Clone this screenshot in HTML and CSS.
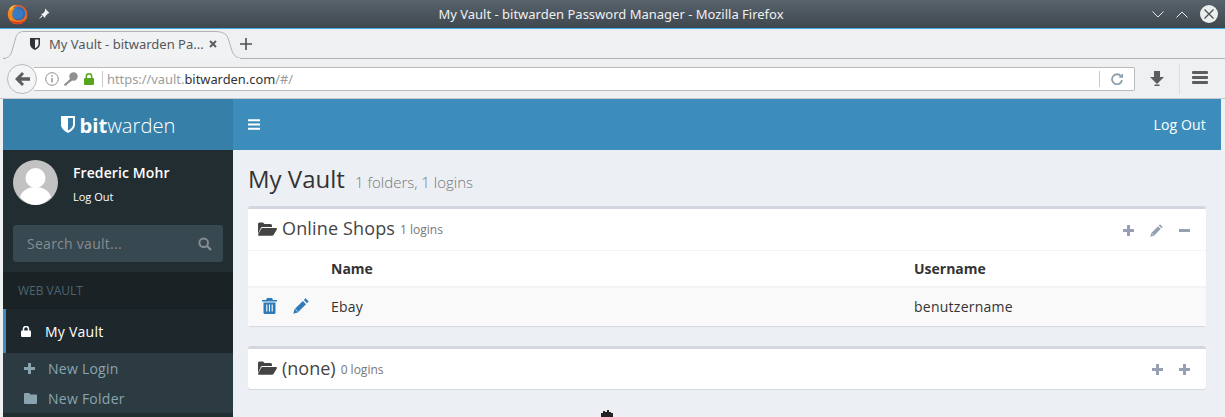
FILE: index.html
```html
<!DOCTYPE html>
<html lang="en">
<head>
    <meta charset="UTF-8">
    <title>My Vault - bitwarden Password Manager</title>
    <link rel="stylesheet" href="styles.css">
</head>
<body>
<div class="titlebar">
    <div class="title-left">
        <svg class="ff" width="21" height="21" viewBox="0 0 21 21"><circle cx="10.500" cy="10.500" r="9.800" fill="#e4602a"/><circle cx="11.500" cy="9.500" r="6.800" fill="#2f6db3"/><path d="M7 4.500c1.500-1.800 4-2.700 6.500-2.300-1.700.5-2.800 1.300-3.300 2.500 2.500-.3 5.500 1 6 4.200.4 3.500-2.500 6.300-6 6-3-.2-5-2.500-4.800-5.500C5.200 7.500 5.700 5.800 7 4.500z" fill="#3f86cf" opacity=".55"/><path d="M1 8c-.8 6 3.500 12 9.500 12 5.500 0 9.500-4 9.800-9-1 3.800-4.500 6.500-8.800 6.300C7 17 4.800 13.500 5.300 9.500 5.500 7.500 6.300 5.500 8 4 4.500 4 2 5.500 1 8z" fill="#f18a1e"/><path d="M1.500 6.500C3 3 6 1 9.500 .8 7 2 5.500 3.500 5 5.500 3.800 5.300 2.500 5.700 1.500 6.500z" fill="#f9c22e"/><path d="M3 16c2 2.700 4.700 4 7.500 4 4 0 7.300-2.200 8.800-5.500-2 2.400-4.800 3.600-8 3.400C8 17.700 5 17 3 16z" fill="#d33c1e"/></svg>
        <svg class="pin" width="12" height="12" viewBox="0 0 12 12"><path d="M7 0.500l4.500 4.500-1.500.5-2.500 2.500-.5 2-4-4 2-.5L7 3z" fill="#f2f3f4"/><path d="M3.500 7.500L.8 11.200l3.700-2.700z" fill="#f2f3f4"/></svg>
    </div>
    <div class="title-text">My Vault - bitwarden Password Manager - Mozilla Firefox</div>
    <div class="title-right">
        <svg width="12" height="7" viewBox="0 0 12 7"><path d="M.5.500L6 6 11.500.500" fill="none" stroke="#e4e7e9" stroke-width="1"/></svg>
        <svg width="12" height="7" viewBox="0 0 12 7"><path d="M.5 6.500L6 1l5.500 5.500" fill="none" stroke="#e4e7e9" stroke-width="1"/></svg>
        <svg width="18" height="18" viewBox="0 0 18 18"><circle cx="9" cy="9" r="9" fill="#eceded"/><path d="M4.500 4.500l9 9m0-9l-9 9" stroke="#45505a" stroke-width="1.300"/></svg>
    </div>
</div>
<div class="tabbar">
    <div class="tab">
        <svg class="tab-shape" width="240" height="31" viewBox="0 0 240 31"><path d="M0 29.500C6 29.500 8 26 9.500 20L13 8C14.500 4 17 2.500 21 2.500L212 2.500C218 2.500 223 4 225 9L229 22C231 27 234 29.500 240 29.500" fill="#f1f2f3" stroke="#b0b3b5"/><rect x="3" y="29" width="234" height="2" fill="#f1f2f3"/></svg>
        <svg class="tab-shield" width="10" height="12" viewBox="0 0 10 12"><path d="M0 0h10v6c0 3-2.500 4.800-5 6-2.500-1.200-5-3-5-6z" fill="#2f3338"/><path d="M5 1.500h3.500V6c0 2-1.700 3.300-3.500 4.300z" fill="#f2f3f5"/></svg>
        <span class="tab-label">My Vault - bitwarden Pa...</span>
        <svg class="tab-close" width="8" height="8" viewBox="0 0 8 8"><path d="M1 1l6 6m0-6L1 7" stroke="#5b5d60" stroke-width="2"/></svg>
    </div>
    <svg class="newtab" width="12" height="12" viewBox="0 0 12 12"><path d="M6 0v12M0 6h12" stroke="#4d4f52" stroke-width="1.600"/></svg>
</div>
<div class="navbar">
    <div class="backbtn">
        <svg width="15" height="14" viewBox="0 0 15 14"><path d="M7 0l2 2-3 3.300h9v3.400H6L9 12l-2 2-7-7z" fill="#5b5d60"/></svg>
    </div>
    <div class="urlbar">
        <svg class="u-info" width="14" height="14" viewBox="0 0 14 14"><circle cx="7" cy="7" r="6.300" fill="none" stroke="#8e9092" stroke-width="1"/><path d="M7 6v4.500M7 3.300v1.500" stroke="#8e9092" stroke-width="1.400"/></svg>
        <svg class="u-key" width="15" height="14" viewBox="0 0 15 14"><circle cx="10.500" cy="4.500" r="4.200" fill="#8e9092"/><path d="M8 6L1 12.500v1h3V12h1.500v-1.500H7L9.500 8z" fill="#8e9092"/></svg>
        <svg class="u-lock" width="10" height="12" viewBox="0 0 10 12"><rect y="5" width="10" height="7" rx="1" fill="#55a61c"/><path d="M2.300 5.500V3.500a2.700 2.700 0 0 1 5.400 0v2" fill="none" stroke="#55a61c" stroke-width="1.500"/></svg>
        <div class="u-sep"></div>
        <div class="u-text">https://vault.<b>bitwarden.com</b>/#/</div>
        <div class="u-sep u-sep2"></div>
        <svg class="u-reload" width="12" height="12" viewBox="0 0 12 12"><path d="M10 3.200A5 5 0 1 0 11 7" fill="none" stroke="#8fa1ad" stroke-width="1.800"/><path d="M7.500 4.800H12V.3z" fill="#8fa1ad"/></svg>
    </div>
    <svg class="dl" width="14" height="15" viewBox="0 0 14 15"><path d="M4 0h6v6h4l-7 7-7-7h4z" fill="#5b5d60"/><rect x="4.500" y="13.500" width="5" height="1.500" fill="#5b5d60"/></svg>
    <div class="nav-sep"></div>
    <div class="burger"><i></i><i></i><i></i></div>
</div>
<div class="page">
    <aside class="sidebar">
        <div class="logo">
            <svg width="14" height="17" viewBox="0 0 14 17"><path d="M0 0h14v8.500c0 4-3.500 6.700-7 8.500-3.500-1.800-7-4.500-7-8.500z" fill="#fff"/><path d="M7 2h5v6.500c0 2.800-2.500 4.700-5 6z" fill="#367fa9"/></svg>
            <span class="logo-text"><b>bit</b>warden</span>
        </div>
        <div class="user">
            <div class="avatar">
                <svg width="45" height="45" viewBox="0 0 45 45"><circle cx="22.500" cy="22.500" r="22.500" fill="#c2c2c2"/><circle cx="22.500" cy="18" r="10" fill="#fff"/><path d="M7 37c2-7 9-10 15.500-10S36 30 38 37c-4 5-9.500 8-15.500 8S11 42 7 37z" fill="#fff"/></svg>
            </div>
            <div class="user-info">
                <div class="user-name">Frederic Mohr</div>
                <div class="user-link">Log Out</div>
            </div>
        </div>
        <div class="search">
            <span>Search vault...</span>
            <svg width="14" height="14" viewBox="0 0 14 14"><circle cx="5.700" cy="5.700" r="4.300" fill="none" stroke="#868c90" stroke-width="2"/><path d="M9 9l4 4" stroke="#868c90" stroke-width="2.400"/></svg>
        </div>
        <div class="side-head">WEB VAULT</div>
        <div class="side-active">
            <svg width="10" height="11" viewBox="0 0 10 11"><rect y="4.500" width="10" height="6.500" rx="1" fill="#fff"/><path d="M2.500 5V3a2.500 2.500 0 0 1 5 0v2" fill="none" stroke="#fff" stroke-width="1.500"/></svg>
            <span>My Vault</span>
        </div>
        <div class="side-sub">
            <div class="side-item">
                <span class="side-ico"><svg width="11" height="11" viewBox="0 0 11 11"><path d="M5.500 0v11M0 5.500h11" stroke="#8aa4af" stroke-width="3"/></svg></span>
                <span>New Login</span>
            </div>
            <div class="side-item">
                <span class="side-ico"><svg width="13" height="11" viewBox="0 0 13 11"><path d="M1 0h4l1.500 1.500H12a1 1 0 0 1 1 1V10a1 1 0 0 1-1 1H1a1 1 0 0 1-1-1V1a1 1 0 0 1 1-1z" fill="#8aa4af"/></svg></span>
                <span>New Folder</span>
            </div>
        </div>
    </aside>
    <div class="main">
        <div class="topbar">
            <svg width="12" height="11" viewBox="0 0 12 11"><path d="M0 1.200h12M0 5.500h12M0 9.800h12" stroke="#fff" stroke-width="2"/></svg>
            <span>Log Out</span>
        </div>
        <div class="content">
            <h1>My Vault <small>1 folders, 1 logins</small></h1>
            <section class="box">
                <div class="box-head">
                    <svg class="folder" width="19" height="14" viewBox="0 0 19 14"><path d="M0 12V2a1.500 1.500 0 0 1 1.500-1.500h3.500L6.500 2h6a1.500 1.500 0 0 1 1.500 1.500V5H4.500C3.500 5 3 5.500 2.500 6.500z" fill="#444"/><path d="M4.500 6H18c1 0 1.200.8.800 1.500L15.500 13c-.3.500-.8.800-1.500.8H1c-.8 0-1.200-.8-.8-1.300L3 7c.4-.6.800-1 1.500-1z" fill="#444"/></svg>
                    <span class="box-title">Online Shops</span>
                    <small>1 logins</small>
                    <div class="box-tools box-tools-first">
                        <svg width="11" height="11" viewBox="0 0 11 11"><path d="M5.500 0v11M0 5.500h11" stroke="#97a0b3" stroke-width="3"/></svg>
                        <svg width="13" height="13" viewBox="0 0 13 13"><path d="M10 .3l2.700 2.700-1.300 1.300-2.700-2.700zM8 2.300L10.700 5 4 11.700l-3.700 1 1-3.700z" fill="#97a0b3"/><path d="M2 9.500l1.500 1.500" stroke="#fff" stroke-width=".7"/></svg>
                        <svg width="11" height="3" viewBox="0 0 11 3"><rect width="11" height="3" fill="#97a0b3"/></svg>
                    </div>
                </div>
                <div class="row row-head">
                    <div class="col-act"></div>
                    <div class="col-name">Name</div>
                    <div class="col-user">Username</div>
                </div>
                <div class="row row-item">
                    <div class="col-act">
                        <svg width="15" height="16" viewBox="0 0 15 16"><path d="M5 0h5l1 2h4v1.500H0V2h4z" fill="#2f7ab8"/><path d="M1.500 4.500h12V14.500A1.500 1.500 0 0 1 12 16H3a1.500 1.500 0 0 1-1.500-1.500z" fill="#2f7ab8"/><path d="M4.800 6.500v7M7.500 6.500v7M10.200 6.500v7" stroke="#fafafa" stroke-width="1.100"/></svg>
                        <svg width="16" height="16" viewBox="0 0 16 16"><path d="M12.500 0.300l3.200 3.200-1.700 1.700-3.200-3.200zM9.800 3l3.200 3.200L4.700 14.500 .3 15.700l1.200-4.400z" fill="#2f7ab8"/><path d="M2.500 11.300l2.200 2.200" stroke="#fafafa" stroke-width=".8"/></svg>
                    </div>
                    <div class="col-name">Ebay</div>
                    <div class="col-user">benutzername</div>
                </div>
            </section>
            <section class="box">
                <div class="box-head box-head-last">
                    <svg class="folder" width="19" height="14" viewBox="0 0 19 14"><path d="M0 12V2a1.500 1.500 0 0 1 1.500-1.500h3.500L6.500 2h6a1.500 1.500 0 0 1 1.500 1.500V5H4.500C3.500 5 3 5.500 2.500 6.500z" fill="#444"/><path d="M4.500 6H18c1 0 1.200.8.800 1.500L15.500 13c-.3.500-.8.800-1.500.8H1c-.8 0-1.200-.8-.8-1.300L3 7c.4-.6.800-1 1.500-1z" fill="#444"/></svg>
                    <span class="box-title">(none)</span>
                    <small>0 logins</small>
                    <div class="box-tools">
                        <svg width="11" height="11" viewBox="0 0 11 11"><path d="M5.500 0v11M0 5.500h11" stroke="#97a0b3" stroke-width="3"/></svg>
                        <svg width="11" height="11" viewBox="0 0 11 11"><path d="M5.500 0v11M0 5.500h11" stroke="#97a0b3" stroke-width="3"/></svg>
                    </div>
                </div>
            </section>
        </div>
    </div>
</div>
<svg class="cursor" width="14" height="8" viewBox="0 0 14 8"><path d="M1 8V3h2V1h2v1h2V0h2v2h2v1h2v5z" fill="#222"/></svg>
</body>
</html>
```

FILE: styles.css
```css
*{
    margin: 0px;
    padding: 0px;
    box-sizing: border-box;
}
html, body{
    height: 417px;
    overflow: hidden;
}
body{
    width: 1225px;
    position: relative;
    background-color: #eff0f1;
    font-family: "Open Sans", "Noto Sans", sans-serif;
}
.titlebar{
    height: 29px;
    display: flex;
    align-items: center;
    justify-content: space-between;
    padding: 0 7px;
    background: linear-gradient(#58636d, #3f474e);
    border-bottom: 1px solid #3daee9;
    position: relative;
}
.title-left, .title-right{
    display: flex;
    align-items: center;
}
.title-left{
    gap: 10px;
}
.title-right{
    gap: 12px;
}
.title-text{
    flex: 1;
    text-align: center;
    color: #eff0f1;
    font-size: 13px;
    padding-left: 20px;
    font-family: "Noto Sans", "Open Sans", sans-serif;
}
.tabbar{
    height: 30px;
    display: flex;
    align-items: center;
    padding-left: 15px;
    border-bottom: 1px solid #b0b3b5;
    margin-left: 3px;
}
.tab{
    width: 212px;
    height: 30px;
    display: flex;
    align-items: center;
    padding: 0 13px 0 12px;
    position: relative;
}
.tab-shape{
    position: absolute;
    left: -15px;
    top: 0;
}
.tab-shield, .tab-label, .tab-close{
    position: relative;
}
.tab-shield{
    margin-right: 9px;
}
.tab-label{
    flex: 1;
    font-size: 13px;
    color: #55585b;
    font-family: "Noto Sans", sans-serif;
    white-space: nowrap;
}
.newtab{
    margin-left: 10px;
    position: relative;
}
.navbar{
    height: 40px;
    display: flex;
    align-items: center;
    padding-left: 7px;
    border-bottom: 1px solid #c6c8ca;
}
.backbtn{
    width: 30px;
    height: 30px;
    border-radius: 50%;
    border: 1px solid #b8babc;
    background-color: #f3f4f5;
    display: flex;
    align-items: center;
    justify-content: center;
    position: relative;
    z-index: 1;
}
.urlbar{
    width: 1101px;
    height: 24px;
    margin-left: -3px;
    display: flex;
    align-items: center;
    padding-left: 11px;
    border: 1px solid #b9bbbd;
    border-left: none;
    border-radius: 0 2px 2px 0;
    background-color: #fff;
}
.u-key{
    margin-left: 4px;
}
.u-lock{
    margin-left: 6px;
}
.u-sep{
    width: 1px;
    height: 16px;
    margin-left: 8px;
    background-color: #c6c8ca;
}
.u-text{
    flex: 1;
    margin-left: 4px;
    font-size: 12.87px;
    color: #9a9c9e;
    font-family: "Noto Sans", sans-serif;
}
.u-text b{
    font-weight: normal;
    color: #2f3336;
}
.u-sep2{
    margin-left: 0;
}
.u-reload{
    margin: 0 11px;
}
.dl{
    margin-left: 15px;
}
.nav-sep{
    width: 1px;
    height: 30px;
    margin-left: 15px;
    background-color: #dcdee0;
}
.burger{
    margin-left: 12px;
}
.burger i{
    display: block;
    width: 16px;
    height: 3px;
    margin-bottom: 2px;
    border-radius: 1px;
    background-color: #5b5d60;
}
.page{
    display: flex;
    width: 1218px;
    height: 318px;
    margin-left: 3px;
    background-color: #ecf0f5;
}
.sidebar{
    width: 230px;
    flex-shrink: 0;
    background-color: #222d32;
}
.logo{
    height: 51px;
    display: flex;
    align-items: center;
    justify-content: center;
    gap: 5px;
    background-color: #367fa9;
    color: #fff;
}
.logo-text{
    font-size: 20.2px;
    font-weight: 300;
}
.logo-text b{
    font-weight: 700;
}
.user{
    display: flex;
    height: 75px;
    padding: 10px 10px 0;
    color: #fff;
}
.avatar{
    width: 45px;
    height: 45px;
}
.user-info{
    margin-left: 15px;
}
.user-name{
    font-size: 14px;
    font-weight: 600;
    letter-spacing: 0.1px;
    line-height: 20px;
    margin-top: 3px;
}
.user-link{
    font-size: 11px;
    line-height: 15px;
    margin-top: 6px;
}
.search{
    height: 37px;
    margin: 0 10px;
    padding: 0 11px 0 14px;
    display: flex;
    align-items: center;
    justify-content: space-between;
    background-color: #374850;
    border-radius: 3px;
    font-size: 14px;
    letter-spacing: 0.27px;
    color: #868c90;
}
.side-head{
    height: 37px;
    margin-top: 10px;
    padding: 0 15px;
    line-height: 37px;
    font-size: 12px;
    color: #4b646f;
    background-color: #1a2226;
}
.side-active{
    height: 44px;
    display: flex;
    align-items: center;
    gap: 14px;
    padding-left: 15px;
    border-left: 3px solid #3c8dbc;
    background-color: #1e282c;
    color: #fff;
    font-size: 14px;
    letter-spacing: 0.25px;
}
.side-sub{
    background-color: #2c3b41;
    height: 60px;
}
.side-item{
    height: 30px;
    display: flex;
    align-items: center;
    padding-left: 21px;
    font-size: 14px;
    letter-spacing: 0.25px;
    color: #8aa4af;
}
.side-ico{
    width: 24px;
    display: flex;
}
.main{
    flex: 1;
    min-width: 0;
}
.topbar{
    height: 51px;
    display: flex;
    align-items: center;
    justify-content: space-between;
    padding: 0 15px;
    background-color: #3c8dbc;
    color: #fff;
    font-size: 14px;
    letter-spacing: 0.15px;
}
.content{
    padding: 14px 15px 0;
}
h1{
    font-size: 24px;
    font-weight: 400;
    line-height: 30px;
    color: #333;
    margin-bottom: 9px;
}
h1 small{
    font-size: 15px;
    font-weight: 300;
    color: #777;
    margin-left: 4px;
}
.box{
    border-top: 3px solid #d2d6de;
    border-radius: 3px;
    background-color: #fff;
    box-shadow: 0 1px 1px rgba(0,0,0,0.1);
    margin-bottom: 20px;
}
.box-head{
    height: 42px;
    display: flex;
    align-items: center;
    padding: 0 16px 0 10px;
    border-bottom: 1px solid #f4f4f4;
    color: #444;
}
.box-head-last{
    border-bottom: none;
    height: 40px;
}
.folder{
    margin-right: 5px;
    margin-top: -2px;
}
.box-title{
    font-size: 18px;
    letter-spacing: 0.15px;
    margin-top: -3px;
}
.box-head-last .box-title{
    letter-spacing: 0;
}
.box-head small{
    margin-left: 5px;
    font-size: 12px;
    color: #777;
}
.box-tools{
    margin-left: auto;
    display: flex;
    align-items: center;
    gap: 16px;
}
.box-tools-first{
    margin-top: 2px;
}
.row{
    display: flex;
    align-items: center;
    font-size: 14px;
    color: #333;
}
.row-head{
    height: 37px;
    font-weight: 700;
    border-bottom: 2px solid #f4f4f4;
}
.row-item{
    height: 38px;
    padding-bottom: 2px;
    letter-spacing: 0.25px;
    background-color: #f9f9f9;
}
.col-act{
    width: 83px;
    padding-left: 14px;
    display: flex;
    align-items: center;
    gap: 16px;
}
.col-name{
    width: 583px;
}
.cursor{
    position: absolute;
    left: 600px;
    top: 410px;
}
```
